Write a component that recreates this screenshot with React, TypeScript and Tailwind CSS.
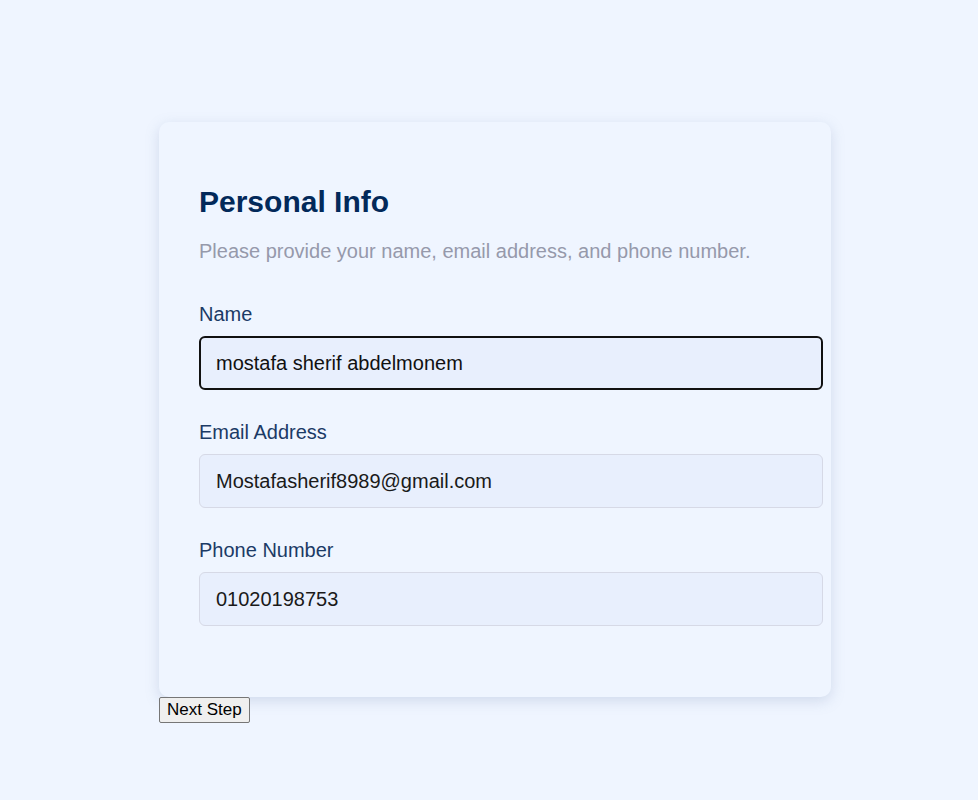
export default function App() {
  const fields = [
    { label: "Name", value: "mostafa sherif abdelmonem", focused: true },
    { label: "Email Address", value: "Mostafasherif8989@gmail.com", focused: false },
    { label: "Phone Number", value: "01020198753", focused: false },
  ];

  return (
    <div className="min-h-[800px] w-full bg-[#eff5ff] pt-[122px] pl-[159px] font-['Liberation_Sans',Arial,sans-serif]">
      <div className="w-[672px] rounded-[10px] bg-[#eff5ff] px-10 pt-[63px] pb-[40px] shadow-[0_4px_14px_rgba(120,140,180,0.25)]">
        <h1 className="text-[30px] font-bold leading-[34px] text-[#02295a]">Personal Info</h1>
        <p className="mt-[21px] text-[20px] leading-[23px] text-[#9699ab]">
          Please provide your name, email address, and phone number.
        </p>

        <div className="mt-[40px]">
          {fields.map((f) => (
            <div key={f.label} className="mb-[31px] last:mb-[31px]">
              <label className="mb-[10px] block text-[20px] leading-[23px] text-[#1b3a66]">
                {f.label}
              </label>
              <div
                className={
                  f.focused
                    ? "flex h-[54px] w-[624px] items-center rounded-[6px] border-2 border-[#111] bg-[#e8effd] px-[15px] text-[20px] text-[#111]"
                    : "flex h-[54px] w-[624px] items-center rounded-[6px] border border-[#d6d9e6] bg-[#e8effd] px-[16px] text-[20px] text-[#1a1a1a]"
                }
              >
                {f.value}
              </div>
            </div>
          ))}
        </div>
      </div>
      <button className="rounded-[2px] border border-[#767676] bg-[#efefef] px-[7px] py-[3px] text-[17px] leading-[18px] text-black">
        Next Step
      </button>
    </div>
  );
}
